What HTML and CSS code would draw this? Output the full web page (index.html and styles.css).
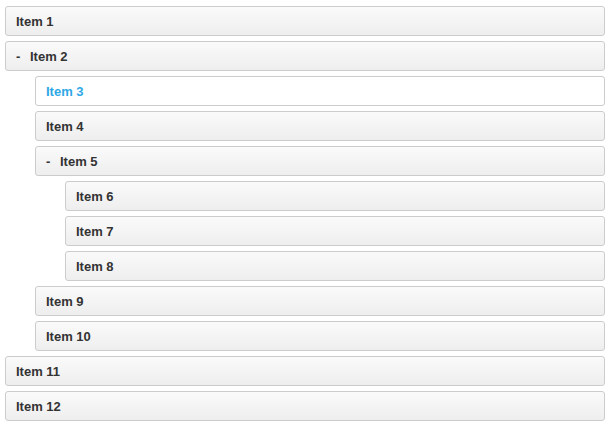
FILE: index.html
```html
<!DOCTYPE html>
<html>
<head>
<meta charset="utf-8">
<link rel="stylesheet" href="styles.css">
</head>
<body>
<ol class="tree">
  <li class="node"><div class="handle">Item 1</div></li>
  <li class="node">
    <div class="handle"><span class="toggle">-</span>Item 2</div>
    <ol class="tree sub">
      <li class="node"><div class="handle active">Item 3</div></li>
      <li class="node"><div class="handle">Item 4</div></li>
      <li class="node">
        <div class="handle"><span class="toggle">-</span>Item 5</div>
        <ol class="tree sub">
          <li class="node"><div class="handle">Item 6</div></li>
          <li class="node"><div class="handle">Item 7</div></li>
          <li class="node"><div class="handle">Item 8</div></li>
        </ol>
      </li>
      <li class="node"><div class="handle">Item 9</div></li>
      <li class="node"><div class="handle">Item 10</div></li>
    </ol>
  </li>
  <li class="node"><div class="handle">Item 11</div></li>
  <li class="node"><div class="handle">Item 12</div></li>
</ol>
</body>
</html>
```
FILE: styles.css
```css
html, body {
  margin: 0;
  padding: 0;
  background: #fff;
}
body {
  padding: 6px 0 0 5px;
  font-family: "Liberation Sans", Arial, Helvetica, sans-serif;
}
.tree {
  list-style: none;
  margin: 0;
  padding: 0;
  width: 600px;
  display: flex;
  flex-direction: column;
  gap: 5px;
}
.tree.sub {
  width: auto;
  padding-left: 30px;
}
.node {
  display: flex;
  flex-direction: column;
  gap: 5px;
}
.handle {
  box-sizing: border-box;
  height: 30px;
  padding: 6px 10px 4px;
  border: 1px solid #ccc;
  border-radius: 3px;
  background: linear-gradient(to bottom, #fafafa 0%, #eee 100%);
  color: #333;
  font-size: 13px;
  font-weight: bold;
  line-height: 18px;
  display: flex;
  align-items: center;
}
.handle.active {
  background: #fff;
  color: #2ea8e5;
}
.toggle {
  width: 14px;
  flex: none;
}
```
